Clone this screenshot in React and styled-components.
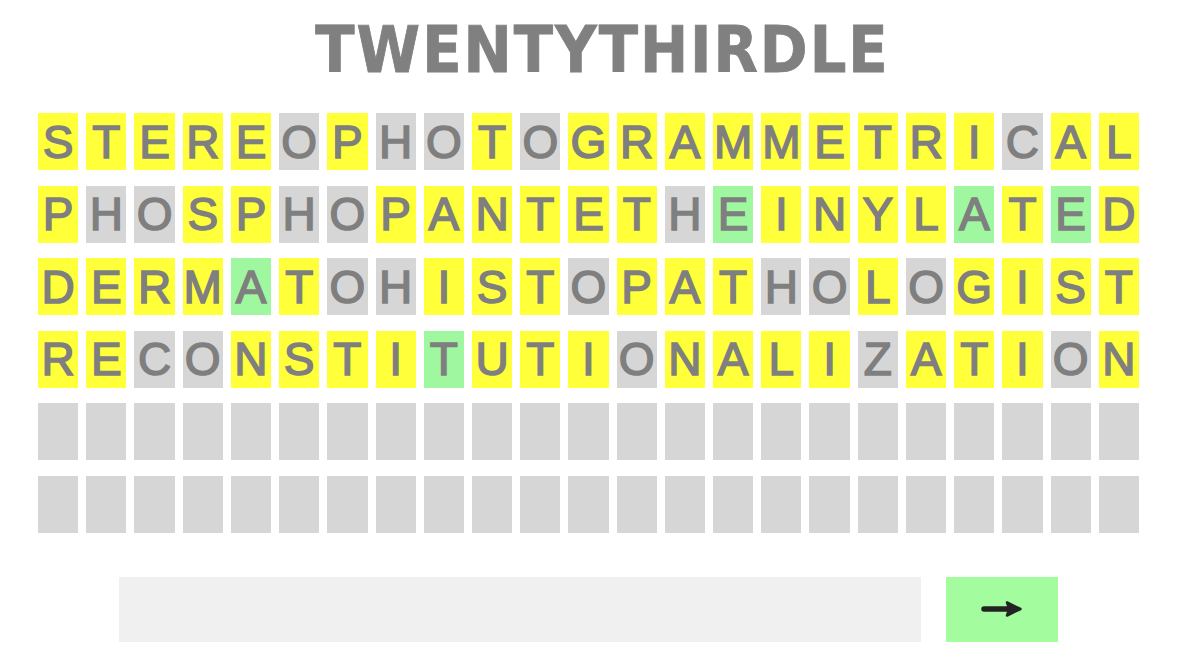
import React, { useState } from 'react';
import styled, { createGlobalStyle } from 'styled-components';

const GlobalStyle = createGlobalStyle`
  body {
    margin: 0;
    background: #fff;
    font-family: "Liberation Sans", Arial, sans-serif;
  }
`;

const Page = styled.div`
  display: flex;
  flex-direction: column;
  padding: 18px 46px 0 38px;
`;

const Title = styled.h1`
  margin: 0 0 31px;
  padding-left: 28px;
  text-align: center;
  font-family: "DejaVu Sans Condensed", "DejaVu Sans", sans-serif;
  font-stretch: condensed;
  font-weight: bold;
  font-size: 64px;
  line-height: 64px;
  letter-spacing: 2px;
  color: #808080;
  -webkit-text-stroke: 0.8px #808080;
`;

const Board = styled.div`
  display: grid;
  grid-template-columns: repeat(23, 1fr);
  column-gap: 8px;
  row-gap: 15.5px;
`;

const colors = {
  y: '#ffff3a',
  g: '#d6d6d6',
  c: '#9ff79f',
  e: '#d6d6d6',
};

const Tile = styled.div`
  height: 57px;
  display: flex;
  align-items: center;
  justify-content: center;
  background: ${(p) => colors[p.$state]};
  font-size: 46px;
  line-height: 1;
  color: #7f7f7f;
  -webkit-text-stroke: 1.5px #7f7f7f;
`;

const InputRow = styled.form`
  display: flex;
  justify-content: center;
  gap: 25px;
  margin-top: 44px;
`;

const GuessInput = styled.input`
  width: 802px;
  height: 65px;
  box-sizing: border-box;
  border: none;
  outline: none;
  background: #f0f0f0;
  padding: 0 16px;
  font-family: "Liberation Sans", Arial, sans-serif;
  font-size: 28px;
  color: #555;
`;

const SubmitButton = styled.button`
  width: 112px;
  height: 65px;
  border: none;
  background: #a3fc9d;
  display: flex;
  align-items: center;
  justify-content: center;
  cursor: pointer;
  padding: 0;
`;

const guesses = [
  ['STEREOPHOTOGRAMMETRICAL', 'yyyyygyggygyyyyyyyyygyy'],
  ['PHOSPHOPANTETHEINYLATED', 'yggyyggyyyyyygcyyyycycy'],
  ['DERMATOHISTOPATHOLOGIST', 'yyyycyggyyygyyyggygyyyy'],
  ['RECONSTITUTIONALIZATION', 'yyggyyyycyyygyyyygyyygy'],
];

function Arrow() {
  return (
    <svg width="42" height="18" viewBox="0 0 42 18">
      <line x1="3" y1="9" x2="33" y2="9" stroke="#232323" strokeWidth="5.5" strokeLinecap="round" />
      <path d="M26 2.5 L39.5 9 L26 15.5 Q29 9 26 2.5 Z" fill="#232323" stroke="#232323" strokeWidth="2.5" strokeLinejoin="round" />
    </svg>
  );
}

function App() {
  const [guess, setGuess] = useState('');

  const rows = [...guesses];
  while (rows.length < 6) rows.push([' '.repeat(23), 'e'.repeat(23)]);

  return (
    <>
      <GlobalStyle />
      <Page>
        <Title>TWENTYTHIRDLE</Title>
        <Board>
          {rows.map(([word, states], r) =>
            word.split('').map((ch, i) => (
              <Tile key={`${r}-${i}`} $state={states[i]}>
                {ch.trim()}
              </Tile>
            ))
          )}
        </Board>
        <InputRow onSubmit={(e) => e.preventDefault()}>
          <GuessInput value={guess} onChange={(e) => setGuess(e.target.value)} />
          <SubmitButton type="submit">
            <Arrow />
          </SubmitButton>
        </InputRow>
      </Page>
    </>
  );
}

export default App;
